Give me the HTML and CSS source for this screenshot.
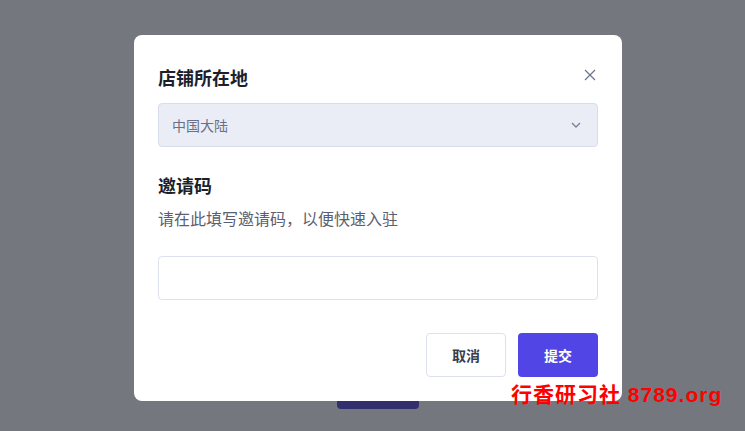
FILE: index.html
```html
<!DOCTYPE html>
<html>
<head>
  <meta charset="utf-8">
  <title>店铺所在地</title>
  <link rel="stylesheet" href="styles.css">
</head>
<body>
  <div class="page">
    <button type="button" class="page-btn">提交</button>
  </div>

  <div class="overlay">
    <div class="modal">
      <button type="button" class="close-btn" aria-label="关闭">
        <svg width="12" height="12" viewBox="0 0 12 12"><path d="M1 1L11 11M11 1L1 11" stroke="#6b7190" stroke-width="1.2" fill="none"/></svg>
      </button>

      <h3 class="modal-title">店铺所在地</h3>
      <div class="select">
        <span>中国大陆</span>
        <svg width="10" height="6" viewBox="0 0 10 6"><path d="M1 1L5 5L9 1" stroke="#7a7f99" stroke-width="1.3" fill="none"/></svg>
      </div>

      <h3 class="modal-title section">邀请码</h3>
      <p class="hint">请在此填写邀请码，以便快速入驻</p>
      <input type="text" class="code-input" autocomplete="off">

      <div class="buttons">
        <button type="button" class="btn btn-secondary">取消</button>
        <button type="button" class="btn btn-primary">提交</button>
      </div>
    </div>
  </div>

  <div class="watermark">行香研习社 8789.org</div>
</body>
</html>
```
FILE: styles.css
```css
* {
  box-sizing: border-box;
}

body {
  margin: 0;
  font-family: "Noto Sans CJK SC", "Noto Sans", sans-serif;
  background: #fff;
}

.page {
  height: 431px;
  padding: 369px 0 0 337px;
}

.page-btn {
  width: 82px;
  height: 40px;
  border: none;
  border-radius: 4px;
  background: #5146e5;
}

.overlay {
  position: fixed;
  inset: 0;
  background: #75777f;
  padding: 35px 0 0 134px;
}

/* the button behind shows through below the dialog */
.overlay::after {
  content: "";
  position: absolute;
  left: 337px;
  top: 395px;
  width: 82px;
  height: 14px;
  border-radius: 0 0 4px 4px;
  background: #312f6e;
}

.modal {
  position: relative;
  z-index: 1;
  width: 488px;
  background: #fff;
  border-radius: 8px;
  padding: 28px 24px 24px;
}

.close-btn {
  position: absolute;
  top: 34px;
  right: 26px;
  padding: 0;
  border: none;
  background: none;
  line-height: 0;
  cursor: pointer;
}

.modal-title {
  margin: 0;
  font-size: 18px;
  line-height: 28px;
  font-weight: 700;
  color: #1d1f2b;
}

.modal-title.section {
  margin-top: 24px;
}

.select {
  display: flex;
  align-items: center;
  justify-content: space-between;
  height: 44px;
  margin-top: 12px;
  padding: 0 16px 0 13px;
  background: #eaedf5;
  border: 1px solid #d9ddeb;
  border-radius: 4px;
  font-size: 14px;
  color: #6b7088;
}

.hint {
  margin: 7px 0 0;
  font-size: 16px;
  line-height: 24px;
  color: #5b5f70;
}

.code-input {
  display: block;
  width: 100%;
  height: 44px;
  margin-top: 26px;
  border: 1px solid #dde1ee;
  border-radius: 4px;
  outline: none;
}

.buttons {
  display: flex;
  justify-content: flex-end;
  gap: 12px;
  margin-top: 33px;
}

.btn {
  width: 80px;
  height: 44px;
  border-radius: 4px;
  font-family: inherit;
  font-size: 14px;
  font-weight: 700;
  cursor: pointer;
}

.btn-secondary {
  background: #fff;
  border: 1px solid #dde1ee;
  color: #3a3d4d;
}

.btn-primary {
  background: #5146e5;
  border: none;
  color: #fff;
}

.watermark {
  position: fixed;
  left: 511px;
  top: 378px;
  z-index: 2;
  font-family: "Liberation Sans", "Noto Sans CJK SC", sans-serif;
  font-size: 21px;
  font-weight: 700;
  letter-spacing: 1px;
  color: #ff0000;
}
```
